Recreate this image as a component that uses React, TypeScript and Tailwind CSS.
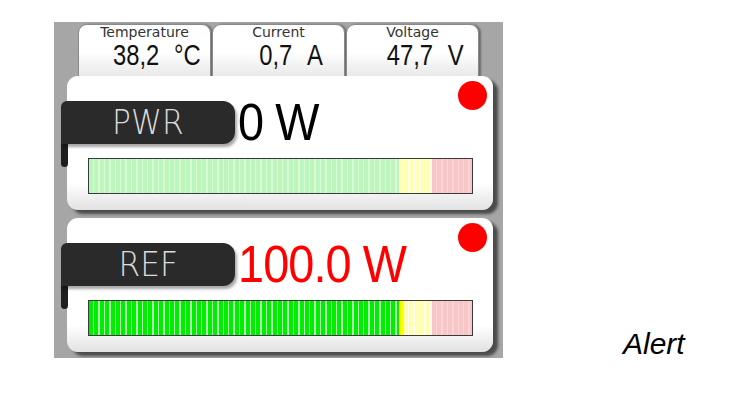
import React from 'react';

type Reading = { label: string; value: string; unit: string };

const readings: Reading[] = [
  { label: 'Temperature', value: '38,2', unit: '°C' },
  { label: 'Current', value: '0,7', unit: 'A' },
  { label: 'Voltage', value: '47,7', unit: 'V' },
];

function ReadingTab({ r }: { r: Reading }) {
  return (
    <div className="w-[133px] h-[56px] rounded-t-[9px] border border-[#8a8a8a] bg-gradient-to-b from-white via-white to-[#e6e6e6] flex flex-col items-center shadow-[2px_0_2px_rgba(0,0,0,0.35)]">
      <div className="text-[14px] leading-[15px] text-[#333] font-['DejaVu_Sans',sans-serif]">{r.label}</div>
      <div className="flex items-baseline gap-[18px] text-[29px] leading-[30px] text-[#111] scale-x-[0.82] pl-[30px]">
        <span>{r.value}</span>
        <span>{r.unit}</span>
      </div>
    </div>
  );
}

function Meter({ active }: { active: boolean }) {
  const green = active
    ? 'bg-[repeating-linear-gradient(90deg,#00ee00_0,#00ee00_4px,#b4ffb4_4px,#b4ffb4_5.4px)]'
    : 'bg-[repeating-linear-gradient(90deg,#bdf5bd_0,#bdf5bd_4px,#d6fcd6_4px,#d6fcd6_5.4px)]';
  return (
    <div className="ml-[21px] w-[385px] h-[36px] border border-[#3a3a3a] flex">
      <div className={`w-[310px] h-full ${green}`} />
      {active && <div className="w-[5px] h-full bg-[#ffff00]" />}
      <div
        className={`${active ? 'w-[28px]' : 'w-[33px]'} h-full bg-[repeating-linear-gradient(90deg,#ffffb4_0,#ffffb4_4px,#fffff0_4px,#fffff0_5.4px)]`}
      />
      <div className="flex-1 h-full bg-[repeating-linear-gradient(90deg,#f7c6c6_0,#f7c6c6_4px,#fcd6d6_4px,#fcd6d6_5.4px)]" />
    </div>
  );
}

function PowerCard({ name, value, red, active }: { name: string; value: string; red?: boolean; active: boolean }) {
  return (
    <div className="relative w-[426px] h-[134px] rounded-[11px] bg-gradient-to-b from-white via-white via-80% to-[#e2e2e2] shadow-[5px_4px_3px_rgba(0,0,0,0.55)] pt-[21px] flex flex-col">
      <div className="absolute right-[6px] top-[5px] w-[29px] h-[29px] rounded-full bg-[#ff0000]" />
      <div className="flex items-center">
        <div className="relative -ml-[6px] w-[174px] h-[43px]">
          <div className="absolute left-0 top-[10px] w-[7px] h-[56px] rounded-b-[5px] bg-[#1e1e1e]" />
          <div className="relative w-full h-full rounded-r-[12px] rounded-tl-[6px] bg-[#2a2a2a] shadow-[2px_3px_3px_rgba(0,0,0,0.35)] flex items-center justify-center text-[34px] font-light text-[#dcdcdc] font-['DejaVu_Sans',sans-serif]">
            <span className="inline-block scale-x-[0.92]">{name}</span>
          </div>
        </div>
        <div
          className={`ml-[3px] text-[52px] leading-[50px] tracking-[-1px] scale-x-[0.9] origin-left ${red ? 'text-[#ff0000]' : 'text-black'}`}
        >
          {value}
        </div>
      </div>
      <div className="mt-[11px]">
        <Meter active={active} />
      </div>
    </div>
  );
}

export default function App() {
  return (
    <div className="w-[754px] h-[399px] bg-white font-['Liberation_Sans',Arial,sans-serif] relative">
      <div className="flex items-start">
        <div className="ml-[54px] mt-[22px] w-[449px] h-[336px] bg-[#a6a6a6] overflow-hidden flex flex-col">
          <div className="ml-[24px] mt-[2px] flex gap-[1px] h-[52px]">
            {readings.map((r) => (
              <ReadingTab key={r.label} r={r} />
            ))}
          </div>
          <div className="ml-[13px] flex flex-col gap-[8px]">
            <PowerCard name="PWR" value="0 W" active={false} />
            <PowerCard name="REF" value="100.0 W" red active />
          </div>
        </div>
        <div className="ml-[120px] mt-[326px] text-[30px] italic text-black leading-[36px]">Alert</div>
      </div>
    </div>
  );
}
